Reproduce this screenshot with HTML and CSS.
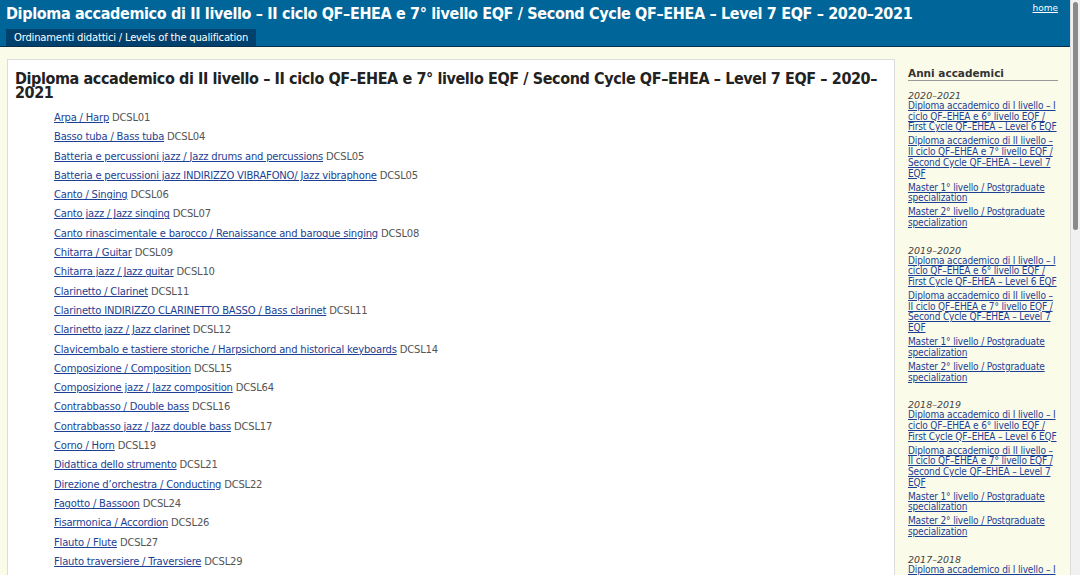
FILE: index.html
```html
<html>
    <head>
        <title>Diploma accademico di II livello</title>
        <link rel="stylesheet" href="styles.css">
    </head>

    <body>
        <div class="page">
            <!-- Header -->
            <div class="header">
                <div class="header-row">
                    <div class="site-title">Diploma accademico di II livello – II ciclo QF–EHEA e 7° livello EQF / Second Cycle QF–EHEA – Level 7 EQF – 2020–2021</div>
                    <a class="home" href="#">home</a>
                </div>
                <div class="tabs">
                    <span class="tab">Ordinamenti didattici / Levels of the qualification</span>
                </div>
            </div>

            <!-- Contents -->
            <div class="wrap">
                <div class="main">
                    <h1>Diploma accademico di II livello – II ciclo QF–EHEA e 7° livello EQF / Second Cycle QF–EHEA – Level 7 EQF – 2020–2021</h1>
                    <ul class="courses">
                        <li><a href="#">Arpa / Harp</a> DCSL01</li>
                        <li><a href="#">Basso tuba / Bass tuba</a> DCSL04</li>
                        <li><a href="#">Batteria e percussioni jazz / Jazz drums and percussions</a> DCSL05</li>
                        <li><a href="#">Batteria e percussioni jazz INDIRIZZO VIBRAFONO/ Jazz vibraphone</a> DCSL05</li>
                        <li><a href="#">Canto / Singing</a> DCSL06</li>
                        <li><a href="#">Canto jazz / Jazz singing</a> DCSL07</li>
                        <li><a href="#">Canto rinascimentale e barocco / Renaissance and baroque singing</a> DCSL08</li>
                        <li><a href="#">Chitarra / Guitar</a> DCSL09</li>
                        <li><a href="#">Chitarra jazz / Jazz guitar</a> DCSL10</li>
                        <li><a href="#">Clarinetto / Clarinet</a> DCSL11</li>
                        <li><a href="#">Clarinetto INDIRIZZO CLARINETTO BASSO / Bass clarinet</a> DCSL11</li>
                        <li><a href="#">Clarinetto jazz / Jazz clarinet</a> DCSL12</li>
                        <li><a href="#">Clavicembalo e tastiere storiche / Harpsichord and historical keyboards</a> DCSL14</li>
                        <li><a href="#">Composizione / Composition</a> DCSL15</li>
                        <li><a href="#">Composizione jazz / Jazz composition</a> DCSL64</li>
                        <li><a href="#">Contrabbasso / Double bass</a> DCSL16</li>
                        <li><a href="#">Contrabbasso jazz / Jazz double bass</a> DCSL17</li>
                        <li><a href="#">Corno / Horn</a> DCSL19</li>
                        <li><a href="#">Didattica dello strumento</a> DCSL21</li>
                        <li><a href="#">Direzione d’orchestra / Conducting</a> DCSL22</li>
                        <li><a href="#">Fagotto / Bassoon</a> DCSL24</li>
                        <li><a href="#">Fisarmonica / Accordion</a> DCSL26</li>
                        <li><a href="#">Flauto / Flute</a> DCSL27</li>
                        <li><a href="#">Flauto traversiere / Traversiere</a> DCSL29</li>
                    </ul>
                </div>

                <!-- Sidebar -->
                <div class="sidebar">
                    <div class="side-title">Anni accademici</div>

                    <div class="year">
                        <div class="year-label">2020–2021</div>
                        <a href="#">Diploma accademico di I livello – I ciclo QF–EHEA e 6° livello EQF / First Cycle QF–EHEA – Level 6 EQF</a>
                        <a href="#">Diploma accademico di II livello – II ciclo QF–EHEA e 7° livello EQF / Second Cycle QF–EHEA – Level 7 EQF</a>
                        <a href="#">Master 1° livello / Postgraduate specialization</a>
                        <a href="#">Master 2° livello / Postgraduate specialization</a>
                    </div>

                    <div class="year">
                        <div class="year-label">2019–2020</div>
                        <a href="#">Diploma accademico di I livello – I ciclo QF–EHEA e 6° livello EQF / First Cycle QF–EHEA – Level 6 EQF</a>
                        <a href="#">Diploma accademico di II livello – II ciclo QF–EHEA e 7° livello EQF / Second Cycle QF–EHEA – Level 7 EQF</a>
                        <a href="#">Master 1° livello / Postgraduate specialization</a>
                        <a href="#">Master 2° livello / Postgraduate specialization</a>
                    </div>

                    <div class="year">
                        <div class="year-label">2018–2019</div>
                        <a href="#">Diploma accademico di I livello – I ciclo QF–EHEA e 6° livello EQF / First Cycle QF–EHEA – Level 6 EQF</a>
                        <a href="#">Diploma accademico di II livello – II ciclo QF–EHEA e 7° livello EQF / Second Cycle QF–EHEA – Level 7 EQF</a>
                        <a href="#">Master 1° livello / Postgraduate specialization</a>
                        <a href="#">Master 2° livello / Postgraduate specialization</a>
                    </div>

                    <div class="year">
                        <div class="year-label">2017–2018</div>
                        <a href="#">Diploma accademico di I livello – I ciclo QF–EHEA e 6° livello EQF / First Cycle QF–EHEA – Level 6 EQF</a>
                    </div>
                </div>
            </div>
        </div>

        <!-- Scrollbar strip -->
        <div class="scrollbar"><div class="thumb"></div></div>
    </body>
</html>
```

FILE: styles.css
```css
/* Page */
html, body {
    height: 100%;
    overflow: hidden;
}
body {
    margin: 0;
    display: flex;
    background-color: #fbfbea;
    font-family: "DejaVu Sans", Verdana, sans-serif;
    color: #444;
}
.page {
    flex: 1;
    min-width: 0;
}
a {
    color: #1d3f94;
}

/* Header */
.header {
    background-color: #006699;
    border-bottom: 1px solid #0a2d4d;
    padding: 4px 12px 0 6px;
}
.header-row {
    display: flex;
    justify-content: space-between;
    align-items: flex-start;
}
.site-title {
    color: white;
    font-family: "DejaVu Sans Condensed", "DejaVu Sans", sans-serif;
    font-size: 16px;
    font-weight: bold;
    letter-spacing: -0.35px;
    line-height: 20px;
    white-space: nowrap;
}
.home {
    color: white;
    font-size: 9px;
    margin-top: -1px;
}
.tabs {
    display: flex;
    margin-top: 5px;
}
.tab {
    background-color: #00416e;
    color: white;
    font-size: 10px;
    letter-spacing: -0.2px;
    line-height: 17px;
    padding: 0 8px;
}

/* Contents */
.wrap {
    display: flex;
    align-items: flex-start;
    padding: 12px 0 0 7px;
}
.main {
    flex: 1;
    background-color: white;
    border: 1px solid #ddd;
    padding: 12px 7px 20px 7px;
    min-height: 600px;
}
.main h1 {
    margin: 0;
    font-family: "DejaVu Sans Condensed", "DejaVu Sans", sans-serif;
    font-size: 16px;
    letter-spacing: -0.4px;
    line-height: 14px;
    color: #222;
}
.courses {
    list-style: none;
    margin: 11px 0 0 0;
    padding-left: 39px;
    font-size: 10px;
    letter-spacing: -0.2px;
    color: #555;
}
.courses li {
    line-height: 14px;
    margin-bottom: 5.3px;
}

/* Sidebar */
.sidebar {
    width: 150px;
    padding: 8px 12px 0 13px;
    font-size: 10px;
}
.side-title {
    font-size: 10.5px;
    font-weight: bold;
    color: #333;
    padding-bottom: 1px;
    border-bottom: 1px solid #999;
    margin-bottom: 9px;
}
.year {
    margin-bottom: 16px;
}
.year-label {
    font-style: italic;
    font-size: 9.5px;
    color: #444;
    line-height: 11px;
}
.year a {
    display: block;
    font-family: "DejaVu Sans Condensed", "DejaVu Sans", sans-serif;
    letter-spacing: -0.15px;
    line-height: 10.7px;
    margin-bottom: 3.3px;
}

/* Fake scrollbar */
.scrollbar {
    width: 10px;
    background-color: #f1f1f1;
    border-left: 1px solid #ddd;
    padding: 2px 2px 0 2px;
    box-sizing: border-box;
}
.thumb {
    height: 228px;
    background-color: #8a8a8a;
    border-radius: 3px;
}
```
